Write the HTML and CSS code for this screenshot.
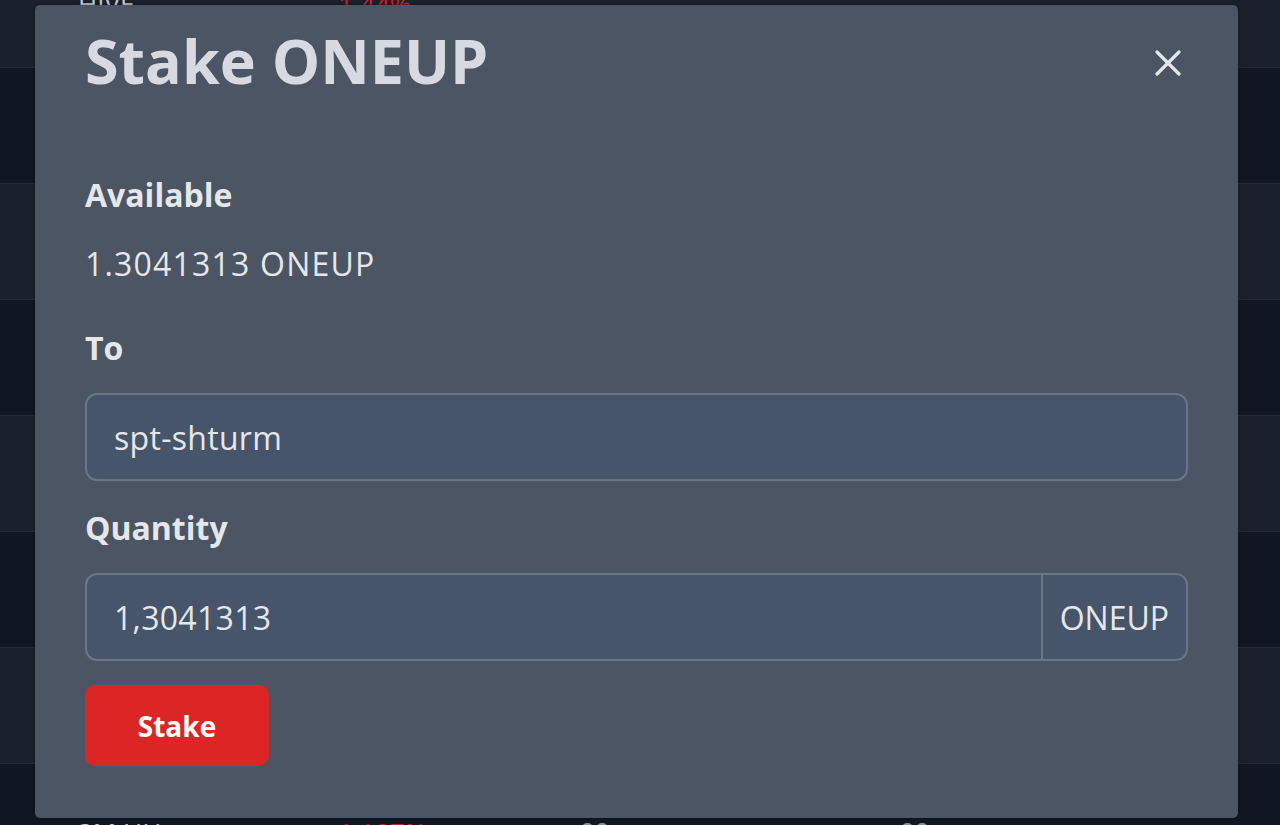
FILE: index.html
```html
<!DOCTYPE html>
<html lang="en">
<head>
    <meta charset="UTF-8">
    <meta name="viewport" content="width=device-width, initial-scale=1.0">
    <title>Stake ONEUP</title>
    <link rel="stylesheet" href="styles.css">
</head>
<body>
    <!-- page behind the modal -->
    <div class="table">
        <div class="row row-light"><span class="cell cell-name">HIVE</span><span class="cell cell-red">-1.44%</span></div>
        <div class="row row-dark"><span class="cell cell-name">BEE</span><span class="cell cell-red">-0.82%</span></div>
        <div class="row row-light"><span class="cell cell-name">LEO</span><span class="cell cell-red">-2.10%</span></div>
        <div class="row row-dark"><span class="cell cell-name">SPS</span><span class="cell cell-red">-0.35%</span></div>
        <div class="row row-light"><span class="cell cell-name">DEC</span><span class="cell cell-red">-1.02%</span></div>
        <div class="row row-dark"><span class="cell cell-name">PAL</span><span class="cell cell-red">-3.11%</span></div>
        <div class="row row-light"><span class="cell cell-name">POB</span><span class="cell cell-red">-0.47%</span></div>
        <div class="row row-dark"><span class="cell cell-name">3M HH</span><span class="cell cell-red">-1.187%</span><span class="cell cell-dim">00</span><span class="cell cell-dim">00</span></div>
    </div>

    <div class="overlay">
        <div class="modal">
            <div class="modal-header">
                <h1 class="modal-title">Stake ONEUP</h1>
                <button class="close" aria-label="Close">
                    <svg width="26" height="26" viewBox="0 0 26 26">
                        <path d="M2 2 L24 24 M24 2 L2 24" stroke="#e5e7eb" stroke-width="3.2" stroke-linecap="round" fill="none"/>
                    </svg>
                </button>
            </div>

            <div class="modal-body">
                <div class="field">
                    <div class="label">Available</div>
                    <div class="value">1.3041313 ONEUP</div>
                </div>

                <div class="field">
                    <label class="label" for="to">To</label>
                    <input class="input" id="to" type="text" value="spt-shturm">
                </div>

                <div class="field">
                    <label class="label" for="qty">Quantity</label>
                    <div class="input-group">
                        <input class="input input-grow" id="qty" type="text" value="1,3041313">
                        <span class="addon">ONEUP</span>
                    </div>
                </div>

                <button class="btn btn-danger">Stake</button>
            </div>
        </div>
    </div>
</body>
</html>
```

FILE: styles.css
```css
:root {
    --page: #111722;
    --row: #1a202b;
    --row-line: #232b37;
    --modal: #4b5563;
    --input: #46556a;
    --border: #6b7687;
    --text: #e5e7eb;
    --title: #d7dbe1;
    --danger: #dc2626;
}

* {
    box-sizing: border-box;
}

body {
    margin: 0;
    height: 825px;
    overflow: hidden;
    background-color: var(--page);
    font-family: 'Open Sans', 'Noto Sans', sans-serif;
    color: var(--text);
}

.table {
    margin-top: -48px;
}

.row {
    height: 116px;
    display: flex;
    align-items: flex-start;
    padding-top: 34px;
    padding-left: 78px;
    border-bottom: 1px solid var(--row-line);
    font-size: 26px;
    color: #c7ccd3;
}

.row-light {
    background-color: var(--row);
}

.row-dark {
    background-color: var(--page);
}

.row:last-child {
    padding-top: 50px;
}

.cell-name {
    width: 252px;
}

.cell-red {
    width: 250px;
    color: #c0262b;
}

.cell-dim {
    width: 320px;
    color: #8a909a;
    font-weight: 700;
}

.overlay {
    position: absolute;
    top: 0;
    left: 0;
    right: 0;
    bottom: 0;
}

.modal {
    position: absolute;
    top: 5px;
    left: 35px;
    width: 1203px;
    height: 813px;
    background-color: var(--modal);
    border-radius: 5px;
    box-shadow: 0 0 3px rgba(0, 0, 0, 0.5);
    padding: 20px 50px 0 50px;
}

.modal-header {
    display: flex;
    justify-content: space-between;
    align-items: flex-start;
}

.modal-title {
    margin: 0;
    font-size: 61px;
    line-height: 72px;
    font-weight: 700;
    color: var(--title);
}

.close {
    background: none;
    border: none;
    padding: 0;
    margin-top: 25px;
    margin-right: 7px;
    cursor: pointer;
}

.modal-body {
    margin-top: 74px;
}

.field {
    margin-bottom: 23px;
}

.label {
    display: block;
    font-size: 32px;
    line-height: 48px;
    font-weight: 700;
    margin-bottom: 21px;
}

.value {
    font-size: 32px;
    line-height: 48px;
    letter-spacing: 1.2px;
    margin-bottom: 36px;
}

.input {
    display: block;
    width: 100%;
    height: 88px;
    padding: 0 27px;
    font-family: inherit;
    font-size: 32px;
    letter-spacing: 0.3px;
    color: var(--text);
    background-color: var(--input);
    border: 2px solid var(--border);
    border-radius: 12px;
    outline: none;
}

.input-group {
    display: flex;
    height: 88px;
}

.input-grow {
    flex: 1;
    border-radius: 12px 0 0 12px;
}

.addon {
    display: flex;
    align-items: center;
    padding: 0 17px;
    font-size: 32px;
    color: var(--text);
    background-color: var(--input);
    border: 2px solid var(--border);
    border-left: none;
    border-radius: 0 12px 12px 0;
}

.btn {
    font-family: inherit;
    border: none;
    cursor: pointer;
}

.btn-danger {
    margin-top: 1px;
    width: 184px;
    height: 81px;
    background-color: var(--danger);
    color: white;
    font-size: 28px;
    font-weight: 700;
    border-radius: 10px;
}
```
